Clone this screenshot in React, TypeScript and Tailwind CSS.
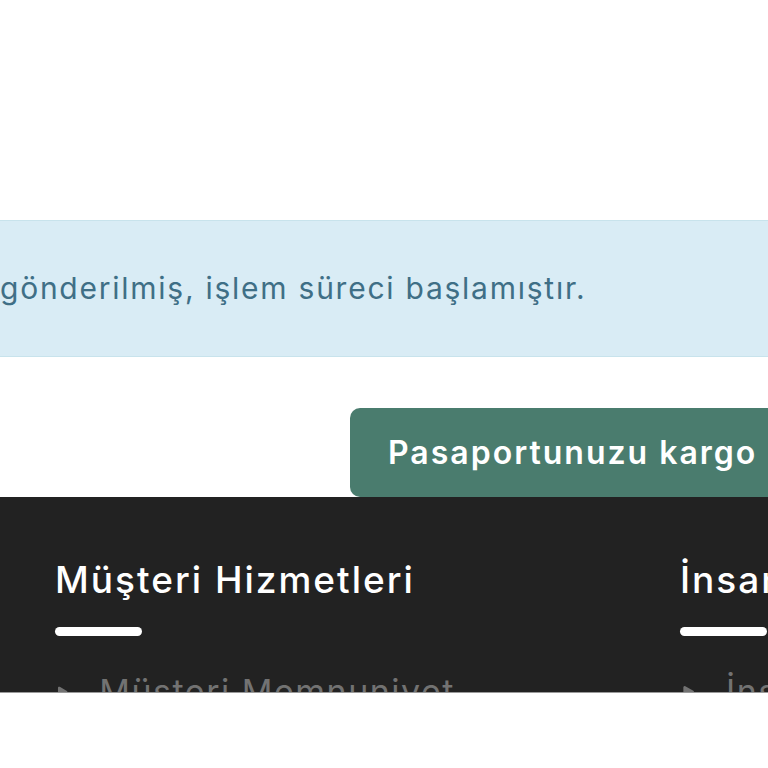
import { Play } from 'lucide-react';

const font = { fontFamily: '"Inter", "Open Sans", sans-serif' };

const FooterColumn = ({ title, item }: { title: string; item: string }) => (
  <div className="w-[400px] shrink-0">
    <h3 className="text-[37px] leading-[44px] font-medium tracking-[2px] text-white whitespace-nowrap">{title}</h3>
    <div className="mt-[25px] h-[9px] w-[87px] rounded-full bg-white" />
    <div className="mt-[36px] flex items-center gap-[30px] text-[#727272]">
      <Play className="h-[16px] w-[16px] fill-[#727272] stroke-none" />
      <span className="text-[34px] leading-[40px] tracking-[1.5px] whitespace-nowrap">{item}</span>
    </div>
  </div>
);

const App = () => {
  return (
    <div className="relative h-[768px] w-[768px] overflow-hidden bg-white" style={font}>
      {/* Bilgi kutusu */}
      <div className="mt-[220px] flex h-[137px] items-center border-y border-[#c8e3ec] bg-[#d9ecf5]">
        <p className="whitespace-nowrap text-[30px] leading-[45px] tracking-[1.75px] text-[#3f6f86]">
          gönderilmiş, işlem süreci başlamıştır.
        </p>
      </div>

      {/* Buton */}
      <div className="mt-[51px] flex">
        <button
          type="button"
          className="ml-[350px] flex h-[89px] w-[600px] shrink-0 items-center rounded-l-[10px] bg-[#4a7c6e] pl-[38px] text-[32px] leading-[40px] font-semibold tracking-[2px] text-white whitespace-nowrap"
        >
          Pasaportunuzu kargo ile gönder
        </button>
      </div>

      {/* Alt bilgi */}
      <div className="h-[196px] overflow-hidden border-b border-[#9a9a9a] bg-[#222222] pt-[61px]">
        <div className="flex gap-[225px] pl-[55px]">
          <FooterColumn title="Müşteri Hizmetleri" item="Müşteri Memnuniyet" />
          <FooterColumn title="İnsan Kaynakları" item="İnsan Kaynakları" />
        </div>
      </div>
    </div>
  );
};

export default App;
